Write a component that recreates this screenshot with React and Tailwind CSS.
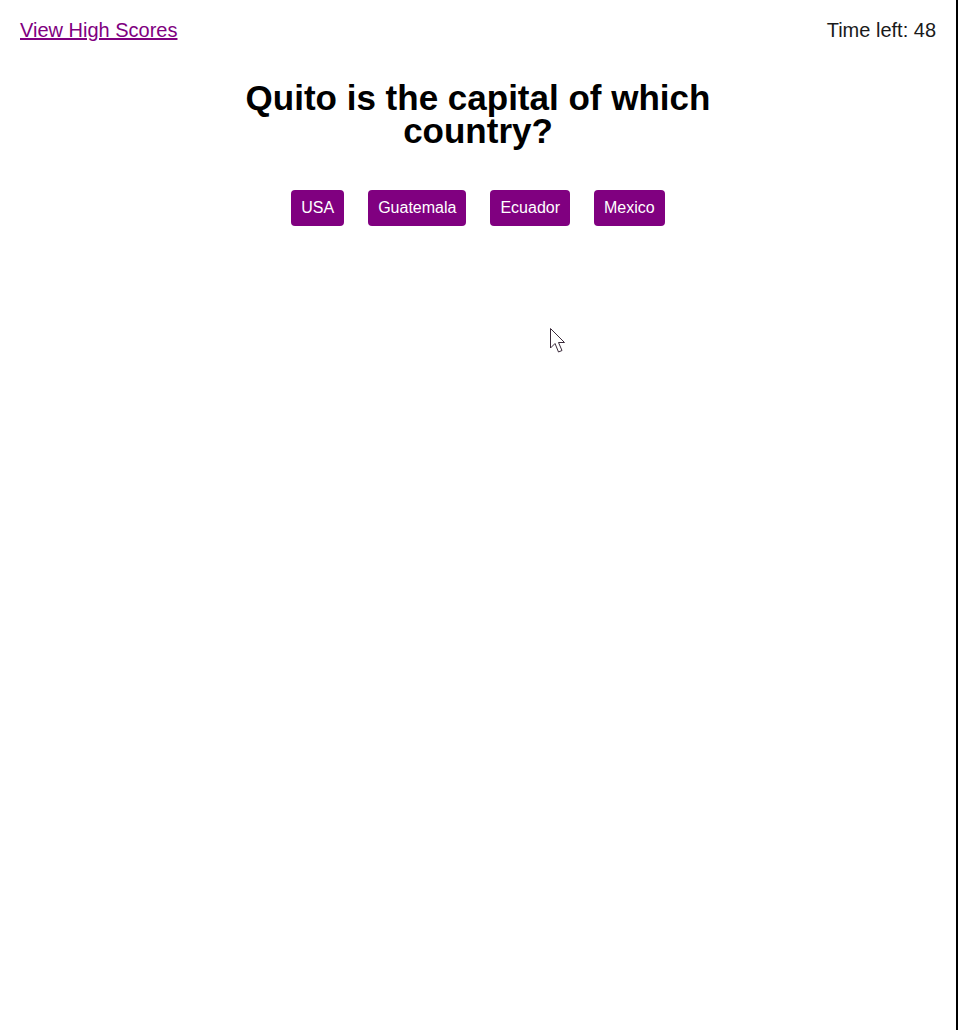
export default function App() {
  const answers = ["USA", "Guatemala", "Ecuador", "Mexico"];
  return (
    <div
      className="relative min-h-[1030px] w-[958px] bg-white border-r-2 border-black"
      style={{ fontFamily: '"Liberation Sans", Arial, sans-serif' }}
    >
      <div className="flex justify-between items-center px-[20px] pt-[19px] text-[20px] leading-[23px]">
        <a href="#" className="text-[#800080] underline">View High Scores</a>
        <span className="text-[#1a1a1a]">Time left: 48</span>
      </div>
      <div className="flex flex-col items-center">
        <h1 className="mt-[39px] w-[500px] text-center text-[35px] leading-[33px] font-bold text-black">
          Quito is the capital of which country?
        </h1>
        <div className="mt-[43px] flex gap-[24px]">
          {answers.map((a) => (
            <button
              key={a}
              className="h-[36px] px-[10px] rounded-[4px] bg-[#800080] text-white text-[16px]"
            >
              {a}
            </button>
          ))}
        </div>
      </div>
      <svg
        className="absolute left-[550px] top-[328px]"
        width="20"
        height="28"
        viewBox="0 0 20 28"
      >
        <path
          d="M0.5 0.5 L0.5 20 L5 15.5 L8.5 24 L12 22.5 L8.5 14.5 L14.5 14.5 Z"
          fill="white"
          stroke="#3a2a3a"
          strokeWidth="1"
        />
      </svg>
    </div>
  );
}
